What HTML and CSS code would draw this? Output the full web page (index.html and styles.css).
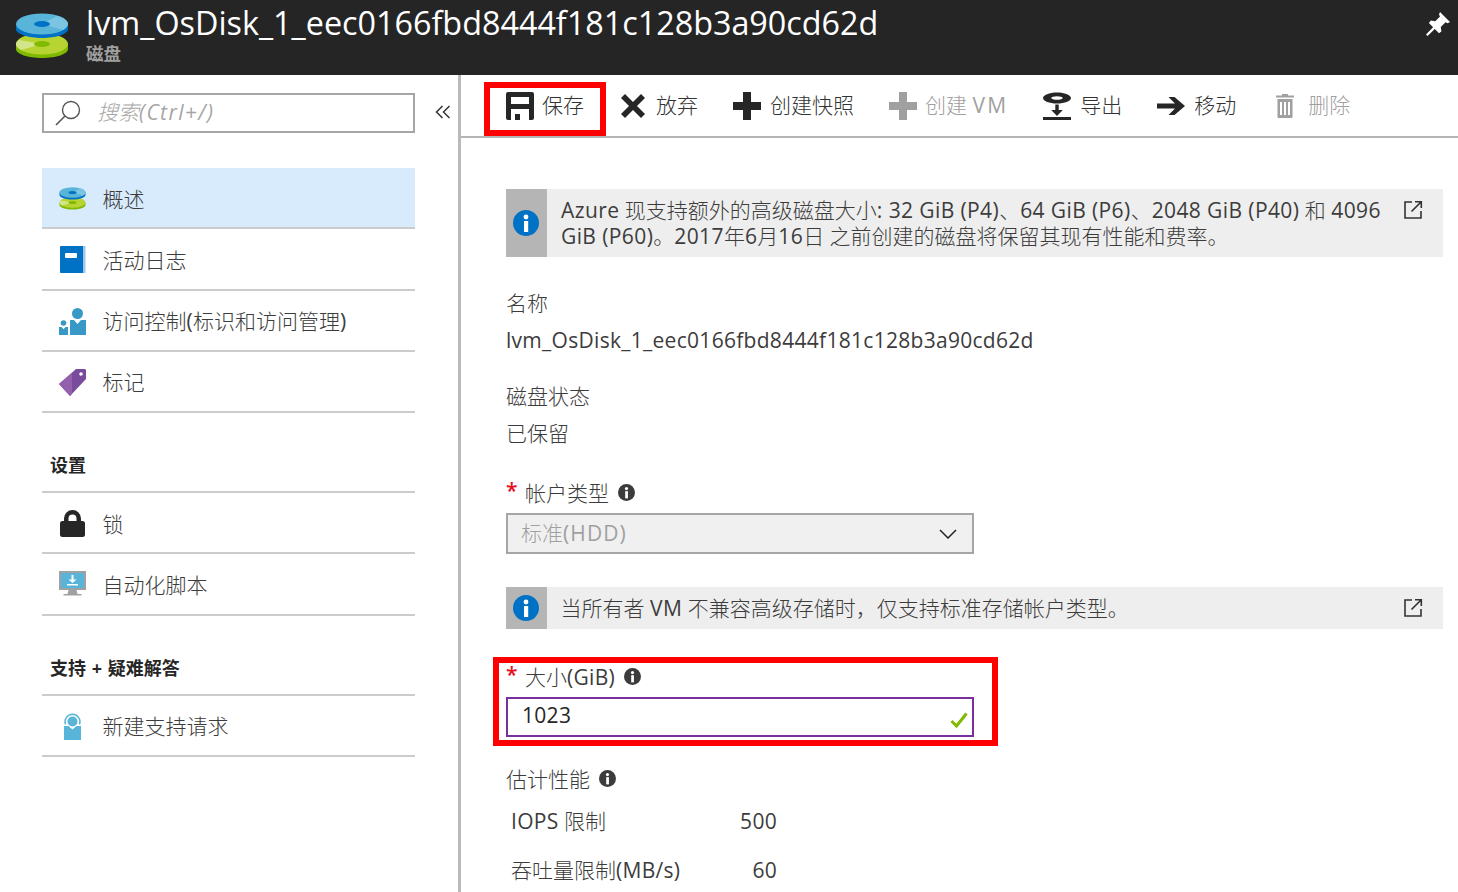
FILE: index.html
```html
<!DOCTYPE html>
<html lang="zh-CN">
<head>
<meta charset="utf-8">
<title>lvm_OsDisk_1</title>
<link rel="stylesheet" href="styles.css">
</head>
<body>
<svg class="sprite" aria-hidden="true">
  <symbol id="disk" viewBox="0 0 54 46">
    <path d="M1 31v5c0 5 12 9 26 9s26-4 26-9v-5z" fill="#7fba00"/>
    <ellipse cx="27" cy="31" rx="26" ry="10.5" fill="#b8d432"/>
    <path d="M27 31 6 37c-3-2-5-4-5-6 0-1 1-3 3-4z" fill="#d3e58a"/>
    <ellipse cx="27" cy="31" rx="8" ry="3" fill="#7fba00"/>
    <path d="M1 11v5c0 5 12 9 26 9s26-4 26-9v-5z" fill="#0072c6"/>
    <ellipse cx="27" cy="11" rx="26" ry="10.5" fill="#59b4d9"/>
    <path d="M27 11 42 3c7 2 11 5 11 8 0 2-2 4-5 6z" fill="#7cc5e2"/>
    <ellipse cx="27" cy="11" rx="8" ry="3" fill="#0072c6"/>
  </symbol>
  <symbol id="info" viewBox="0 0 26 26">
    <circle cx="13" cy="13" r="13" fill="currentColor"/>
    <circle cx="13" cy="7" r="2.4" fill="#fff"/>
    <rect x="11" y="11" width="4.2" height="11" fill="#fff"/>
  </symbol>
  <symbol id="ext" viewBox="0 0 20 20">
    <path d="M9 2H2v16h16v-7M12 1.700h6.300V8M18 2 8.500 11.500" fill="none" stroke="currentColor" stroke-width="1.600"/>
  </symbol>
  <symbol id="plus" viewBox="0 0 28 28">
    <path d="M10 0h8v10h10v8H18v10h-8V18H0v-8h10z" fill="currentColor"/>
  </symbol>
</svg>

<header class="blade-header">
  <svg class="header-icon"><use href="#disk"/></svg>
  <div class="header-text">
    <h1 class="header-title">lvm_OsDisk_1_eec0166fbd8444f181c128b3a90cd62d</h1>
    <div class="header-sub">磁盘</div>
  </div>
  <svg class="pin-icon" viewBox="0 0 24 24"><path d="M14 0 24 10l-2.500 1.200-2-1-4.700 4.700.6 4.600-2.400 1.800-4.200-4.200L1.500 24 0 22.500l7.100-7.300-4.200-4.300 1.900-2.300 4.500.6 4.700-4.700-1-2z" fill="#fff"/></svg>
</header>

<div class="blade">
  <aside class="sidebar">
    <div class="search-row">
      <div class="search-box">
        <svg class="search-icon" viewBox="0 0 26 26"><circle cx="16" cy="10" r="8.500" fill="none" stroke="#555" stroke-width="1.400"/><path d="M10 16 1 25" stroke="#555" stroke-width="1.600"/></svg>
        <span class="search-placeholder">搜索<span class="lat">(Ctrl+/)</span></span>
      </div>
      <svg class="collapse-icon" viewBox="0 0 16 16"><path d="M7.500 2 1.500 8l6 6M14.500 2l-6 6 6 6" fill="none" stroke="#333" stroke-width="1.500"/></svg>
    </div>

    <nav class="nav">
      <a class="nav-item is-selected"><span class="nav-icon"><svg class="i-disk"><use href="#disk"/></svg></span>概述</a>
      <a class="nav-item"><span class="nav-icon"><svg class="i-27" viewBox="0 0 27 27"><path d="M2 0h24.500v27H2z" fill="#9cc9ea"/><path d="M1 1a1 1 0 0 1 1-1h22v27H2a1 1 0 0 1-1-1z" fill="#0072c6"/><rect x="6" y="7" width="12" height="5" rx="1" fill="#fff"/></svg></span>活动日志</a>
      <a class="nav-item"><span class="nav-icon"><svg class="i-27" viewBox="0 0 27 27"><circle cx="18.500" cy="5.500" r="5.500" fill="#3999c6"/><path d="M11 12h4l3.500 4 3.500-4h5v15H11z" fill="#3999c6"/><circle cx="4.500" cy="15" r="2.800" fill="#3999c6"/><path d="M0 19h2.500l2 2.300 2-2.300H9v8H0z" fill="#3999c6"/></svg></span><span>访问控制<span class="lat">(</span>标识和访问管理<span class="lat">)</span></span></a>
      <a class="nav-item"><span class="nav-icon"><svg class="i-27" viewBox="0 0 27 27"><path d="M17 0h9l1 1v9L11 27 0 15z" fill="#7a4a9d"/><path d="M13 4 0 15l11 12 2-2z" fill="#9560ab"/><circle cx="22" cy="5" r="1.800" fill="#fff"/></svg></span>标记</a>

      <h2 class="nav-heading">设置</h2>
      <a class="nav-item"><span class="nav-icon"><svg class="i-27" viewBox="0 0 27 27"><path d="M5 12V8.500a8.500 8.500 0 0 1 17 0V12h-4.500V8.500a4 4 0 0 0-8 0V12z" fill="#262626"/><rect x="1" y="11" width="25" height="16" rx="2.500" fill="#262626"/></svg></span>锁</a>
      <a class="nav-item"><span class="nav-icon"><svg class="i-27" viewBox="0 0 27 27"><rect width="27" height="19" fill="#a0a1a2"/><rect x="2" y="2" width="23" height="15" fill="#59b4d9"/><path d="M12.500 4h2v4.500h3L13.500 12 9.500 8.500h3zM8 13h11v1.500H8z" fill="#fff"/><path d="M9.500 19h8l1 4h4v1.500h-18V23h4z" fill="#a0a1a2"/></svg></span>自动化脚本</a>

      <h2 class="nav-heading">支持 + 疑难解答</h2>
      <a class="nav-item"><span class="nav-icon"><svg class="i-27" viewBox="0 0 27 27"><path d="M6.500 11.500a7.500 7.500 0 1 1 14 0" fill="none" stroke="#59b4d9" stroke-width="1.400"/><circle cx="13.500" cy="8.500" r="5" fill="#59b4d9"/><path d="M5 13h4.500l4 3.500 4-3.500H22v14H5z" fill="#59b4d9"/></svg></span>新建支持请求</a>
    </nav>
  </aside>

  <main class="main">
    <div class="toolbar">
      <button class="tool">
        <svg class="tool-icon" viewBox="0 0 28 28"><path d="M2 0h24a2 2 0 0 1 2 2v24a2 2 0 0 1-2 2h-3V17H5v11H2a2 2 0 0 1-2-2V2a2 2 0 0 1 2-2z" fill="#262626"/><rect x="5" y="5" width="18" height="7" fill="#fff"/><rect x="9" y="22" width="5" height="6" fill="#262626"/></svg>
        <span class="tool-label">保存</span>
        <span class="highlight highlight-save"></span>
      </button>
      <button class="tool">
        <svg class="tool-icon" viewBox="0 0 28 28"><path d="M6 2 14 10l8-8 4 4-8 8 8 8-4 4-8-8-8 8-4-4 8-8-8-8z" fill="#262626"/></svg>
        <span class="tool-label">放弃</span>
      </button>
      <button class="tool">
        <svg class="tool-icon"><use href="#plus"/></svg>
        <span class="tool-label">创建快照</span>
      </button>
      <button class="tool is-disabled tool-vm">
        <svg class="tool-icon"><use href="#plus"/></svg>
        <span class="tool-label">创建 <span class="lat">VM</span></span>
      </button>
      <button class="tool">
        <svg class="tool-icon" viewBox="0 0 28 28"><path fill-rule="evenodd" d="M14 .5c7.700 0 14 2.500 14 5.500s-6.300 5.500-14 5.500S0 9 0 6 6.300.5 14 .5zm0 3.700c-3.100 0-5.700.8-5.700 1.800s2.600 1.800 5.700 1.800 5.700-.8 5.700-1.800-2.600-1.800-5.700-1.800z" fill="#262626"/><path d="M12.300 12.500h3.400v5.500h4.100L14 24l-5.800-6h4.100zM0 25h28v3H0z" fill="#262626"/></svg>
        <span class="tool-label">导出</span>
      </button>
      <button class="tool">
        <svg class="tool-icon" viewBox="0 0 28 28"><path d="M0 11.500h18L11.500 5h6L28 14 17.500 23h-6l6.500-6.500H0z" fill="#262626"/></svg>
        <span class="tool-label">移动</span>
      </button>
      <button class="tool is-disabled">
        <svg class="tool-icon" viewBox="0 0 28 28"><path d="M11 2h6v1.500h6v2H5v-2h6zM6.500 7h15v18a1 1 0 0 1-1 1h-13a1 1 0 0 1-1-1zm2.500 3v13h2V10zm4 0v13h2V10zm4 0v13h2V10z" fill="currentColor" fill-rule="evenodd"/></svg>
        <span class="tool-label">删除</span>
      </button>
    </div>

    <div class="content">
      <div class="banner banner-tall">
        <div class="banner-side"><svg class="banner-info"><use href="#info"/></svg></div>
        <p class="banner-text"><span class="lat">Azure</span> 现支持额外的高级磁盘大小<span class="lat">: 32 GiB (P4)</span>、<span class="lat">64 GiB (P6)</span>、<span class="lat">2048 GiB (P40)</span> 和 <span class="lat">4096</span><br><span class="lat">GiB (P60)</span>。<span class="lat">2017</span>年<span class="lat">6</span>月<span class="lat">16</span>日 之前创建的磁盘将保留其现有性能和费率。</p>
        <svg class="banner-ext"><use href="#ext"/></svg>
      </div>

      <div class="label label-name">名称</div>
      <div class="value"><span class="lat">lvm_OsDisk_1_eec0166fbd8444f181c128b3a90cd62d</span></div>

      <div class="label label-state">磁盘状态</div>
      <div class="value">已保留</div>

      <div class="label label-account"><span class="req">*</span>帐户类型<svg class="mini-info"><use href="#info"/></svg></div>
      <div class="select">
        <span class="select-text">标准<span class="lat">(HDD)</span></span>
        <svg class="select-chevron" viewBox="0 0 18 10"><path d="M1 1l8 8 8-8" fill="none" stroke="#222" stroke-width="1.500"/></svg>
      </div>

      <div class="banner banner-short">
        <div class="banner-side"><svg class="banner-info"><use href="#info"/></svg></div>
        <p class="banner-text">当所有者 <span class="lat">VM</span> 不兼容高级存储时，仅支持标准存储帐户类型。</p>
        <svg class="banner-ext"><use href="#ext"/></svg>
      </div>

      <div class="size-field">
        <span class="highlight highlight-size"></span>
        <div class="label"><span class="req">*</span><span>大小<span class="lat">(GiB)</span></span><svg class="mini-info"><use href="#info"/></svg></div>
        <div class="input">
          <span class="input-text lat">1023</span>
          <svg class="input-check" viewBox="0 0 18 16"><path d="M1.500 9l5 5L16.500 1.500" fill="none" stroke="#7fba00" stroke-width="3"/></svg>
        </div>
      </div>

      <div class="label label-perf">估计性能<svg class="mini-info"><use href="#info"/></svg></div>
      <div class="metrics">
        <span><span class="lat">IOPS</span> 限制</span><span class="metric-value lat">500</span>
        <span>吞吐量限制<span class="lat">(MB/s)</span></span><span class="metric-value lat">60</span>
      </div>
    </div>
  </main>
</div>
</body>
</html>
```
FILE: styles.css
```css
* { box-sizing: border-box; }

html, body {
  margin: 0;
  height: 892px;
  overflow: hidden;
}

body {
  display: flex;
  flex-direction: column;
  background: #fff;
  color: #3c3c3c;
  font-family: "Open Sans", "Noto Sans CJK SC", sans-serif;
  font-size: 21px;
  line-height: 28px;
  font-weight: 400;
}

.sprite { display: none; }

/* Latin runs: regular weight, slightly tracked */
.lat { font-weight: 400; letter-spacing: 0.29px; }

/* Header */
.blade-header {
  flex: none;
  height: 75px;
  display: flex;
  align-items: flex-start;
  background: #252525;
  color: #fff;
  padding-left: 15px;
}
.header-icon { width: 54px; height: 46px; margin-top: 13px; flex: none; }
.header-text { margin-left: 17px; flex: 1; }
.header-title {
  margin: 0;
  padding-top: 3px;
  font-size: 32.350px;
  line-height: 38px;
  font-weight: 400;
}
.header-sub {
  margin-top: 1px;
  font-size: 17.500px;
  line-height: 22px;
  color: #a0a0a0;
  font-weight: 700;
}
.pin-icon { width: 24px; height: 24px; margin: 12px 8px 0 0; flex: none; }

/* Layout */
.blade { flex: 1; display: flex; min-height: 0; }

.sidebar {
  flex: none;
  width: 461px;
  border-right: 3px solid #bababa;
  padding: 18px 0 0 42px;
}
.search-row { display: flex; align-items: center; }
.search-box {
  width: 373px;
  height: 40px;
  border: 2px solid #a6a6a6;
  display: flex;
  align-items: center;
  padding-left: 11px;
}
.search-icon { width: 26px; height: 26px; flex: none; }
.search-placeholder {
  margin: -2px 0 0 16px;
  font-style: italic;
  color: #a6a6a6;
  font-weight: 300;
}
.search-placeholder .lat { letter-spacing: 1.400px; }
.collapse-icon { width: 16px; height: 16px; margin: -2px 0 0 20px; }

.nav { width: 373px; margin-top: 35px; }
.nav-item {
  display: flex;
  align-items: center;
  height: 61.250px;
  padding-top: 2px;
  border-bottom: 2px solid #ccc;
  color: #3c3c3c;
  font-weight: 300;
}
.nav-item.is-selected { background: #d8ebfd; }
.nav-icon {
  flex: none;
  width: 60.500px;
  padding-left: 17px;
  display: flex;
}
.i-disk { width: 27px; height: 23px; }
.i-27 { width: 27px; height: 27px; }
.nav-heading {
  margin: 0;
  height: 80px;
  padding: 38px 0 0 8px;
  border-bottom: 2px solid #ccc;
  font-size: 18px;
  line-height: 28px;
  font-weight: 700;
  color: #262626;
  word-spacing: 1px;
}

/* Main */
.main { flex: 1; min-width: 0; display: flex; flex-direction: column; }
.toolbar {
  flex: none;
  height: 63px;
  border-bottom: 2px solid #b5b5b5;
  padding: 16px 0 0 45px;
  display: flex;
  align-items: flex-start;
  gap: 35px;
}
.tool {
  position: relative;
  display: flex;
  align-items: center;
  gap: 9px;
  padding: 0;
  border: 0;
  background: none;
  font: inherit;
  font-weight: 300;
  color: #333;
  height: 30px;
}
.tool:first-child { gap: 8px; }
.tool-label { margin-top: -2px; }
.tool-icon { width: 28px; height: 28px; color: #262626; flex: none; }
.tool.is-disabled { color: #a0a0a0; }
.tool.is-disabled .tool-icon { color: #a0a0a0; }
.tool-vm { gap: 8px; }
.tool-vm .lat { letter-spacing: 2.200px; }

.highlight { position: absolute; border: 6px solid #f00; pointer-events: none; }
.highlight-save { left: -22px; top: -9px; width: 122px; height: 54px; }
.highlight-size { left: -13px; top: -6px; width: 505px; height: 89px; }

.content { padding: 51px 15px 0 45px; font-weight: 300; }

.banner { display: flex; background: #eee; }
.banner-tall { height: 68px; }
.banner-short { height: 42px; margin-top: 33px; }
.banner-side {
  flex: none;
  width: 41px;
  padding-right: 1px;
  background: #b5b5b5;
  display: flex;
  align-items: center;
  justify-content: center;
}
.banner-info { width: 26px; height: 26px; color: #0072c6; }
.banner-text {
  margin: 0;
  flex: 1;
  padding: 8px 0 0 14px;
  line-height: 26px;
}
.banner-text .lat { letter-spacing: 0.400px; }
.banner-short .banner-text { padding-left: 13.500px; }
.banner-ext { flex: none; width: 20px; height: 20px; margin: 11px 20px 0 0; color: #333; }

.label { line-height: 28px; display: flex; align-items: center; }
.label-name { margin-top: 32px; }
.label-state { margin-top: 28px; }
.label-account { margin-top: 32px; }
.label-perf { margin-top: 28px; }
.value { margin-top: 9px; line-height: 28px; }

.req { color: #e81123; width: 19px; font-weight: 600; align-self: flex-start; height: 22px; line-height: 22px; }
.mini-info { width: 17px; height: 17px; margin: -2px 0 0 9px; color: #3c3c3c; }

.select {
  width: 468px;
  height: 41px;
  margin-top: 6px;
  border: 2px solid #a6a6a6;
  background: #f0f0f0;
  color: #a0a0a0;
  display: flex;
  align-items: center;
  justify-content: space-between;
  padding: 0 15px 0 13px;
}
.select-text { margin-top: -2px; }
.select-text .lat { font-weight: 400; letter-spacing: 1.100px; }
.select-chevron { width: 18px; height: 10px; }

.size-field { position: relative; margin-top: 34px; }
.input {
  width: 468px;
  height: 40px;
  margin-top: 6px;
  border: 2px solid #7a2f9e;
  display: flex;
  align-items: center;
  justify-content: space-between;
  padding: 0 4px 0 14px;
  color: #262626;
  font-weight: 400;
}
.input-text { margin-top: -5px; }
.input-check { width: 18px; height: 16px; margin-top: 6px; }

.metrics {
  display: grid;
  grid-template-columns: 225px 41px;
  row-gap: 21px;
  margin-top: 14px;
  padding-left: 5px;
}
.metric-value { text-align: right; }
```
